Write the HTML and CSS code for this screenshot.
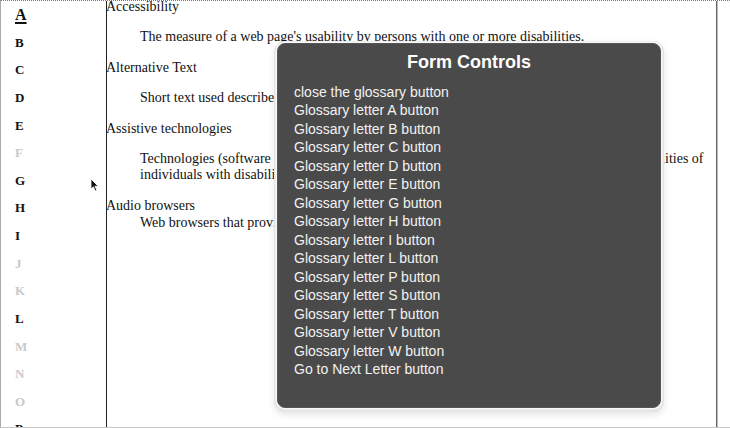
FILE: index.html
```html
<!DOCTYPE html>
<html lang="en">
<head>
<meta charset="utf-8">
<title>Glossary</title>
<link rel="stylesheet" href="styles.css">
</head>
<body>
<div class="frame">
  <nav class="letters">
    <a class="letter current">A</a>
    <a class="letter">B</a>
    <a class="letter">C</a>
    <a class="letter">D</a>
    <a class="letter">E</a>
    <span class="letter off">F</span>
    <a class="letter">G</a>
    <a class="letter">H</a>
    <a class="letter">I</a>
    <span class="letter off">J</span>
    <span class="letter off">K</span>
    <a class="letter">L</a>
    <span class="letter off">M</span>
    <span class="letter off">N</span>
    <span class="letter off">O</span>
    <a class="letter">P</a>
  </nav>
  <main class="content">
    <dl class="terms">
      <dt>Accessibility</dt>
      <dd>The measure of a web page's usability by persons with one or more disabilities.</dd>
      <dt>Alternative Text</dt>
      <dd>Short text used described the content and function of an image.</dd>
      <dt>Assistive technologies</dt>
      <dd class="wide">Technologies (software or hardware) used to extend, maintain, improve the functional capabilities of individuals with disabilities.</dd>
      <dt>Audio browsers</dt>
      <dd class="tight">Web browsers that provide spoken output of page content.</dd>
    </dl>
  </main>
  <div class="gutter"></div>
</div>

<svg class="cursor" width="10" height="15" viewBox="0 0 10 15" aria-hidden="true">
  <path d="M1 1 L1 11 L3.4 8.8 L5.2 13 L6.8 12.3 L5 8.2 L8.2 8.2 Z" fill="#111" stroke="#fff" stroke-width="0.8"/>
</svg>

<section class="rotor" aria-label="Form Controls">
  <h2 class="rotor-title">Form Controls</h2>
  <ul class="rotor-list">
    <li>close the glossary button</li>
    <li>Glossary letter A button</li>
    <li>Glossary letter B button</li>
    <li>Glossary letter C button</li>
    <li>Glossary letter D button</li>
    <li>Glossary letter E button</li>
    <li>Glossary letter G button</li>
    <li>Glossary letter H button</li>
    <li>Glossary letter I button</li>
    <li>Glossary letter L button</li>
    <li>Glossary letter P button</li>
    <li>Glossary letter S button</li>
    <li>Glossary letter T button</li>
    <li>Glossary letter V button</li>
    <li>Glossary letter W button</li>
    <li>Go to Next Letter button</li>
  </ul>
</section>
</body>
</html>
```
FILE: styles.css
```css
html, body {
  margin: 0;
  padding: 0;
  background: #fff;
}
body {
  width: 730px;
  height: 428px;
  overflow: hidden;
  position: relative;
  font-family: "Liberation Serif", "Times New Roman", serif;
  color: #111;
}
.frame {
  display: flex;
  height: 428px;
  box-sizing: border-box;
  border-top: 1px dotted #777;
  border-left: 1px solid #aaa;
  border-bottom: 1px solid #c8c8c8;
  overflow: hidden;
}
.letters {
  flex: none;
  width: 106px;
  box-sizing: border-box;
  border-right: 1px solid #222;
  display: flex;
  flex-direction: column;
  padding-left: 14px;
}
.letter {
  display: block;
  flex: none;
  height: 27.64px;
  line-height: 27.64px;
  font-size: 13px;
  font-weight: bold;
  color: #111;
}
.letter.current {
  font-size: 16px;
  text-decoration: underline;
  text-decoration-thickness: 2px;
  text-underline-offset: 2px;
}
.letter.off {
  color: #c9c9c9;
}
.content {
  flex: none;
  width: 609px;
  border-right: 1px solid #666;
  box-shadow: 1px 0 0 #bbb;
  font-size: 14px;
}
.gutter {
  flex: 1;
}
.terms {
  margin: -2.5px 0 0 0;
  padding: 0 4px 0 0;
  line-height: 16px;
}
.terms dt {
  margin: 0 0 0 -1px;
}
.terms dd {
  margin: 14.5px 0 14.5px 33px;
}
.terms dd.tight {
  margin: 1px 0 0 33px;
}
.cursor {
  position: absolute;
  left: 90px;
  top: 178px;
}
.rotor {
  position: absolute;
  left: 277px;
  top: 43px;
  width: 384px;
  height: 365px;
  box-sizing: border-box;
  background: #4a4a4a;
  border: 1px solid #565656;
  border-radius: 8px;
  box-shadow: 0 0 0 1.5px #f7f7f7, 0 1px 0 3px #e4e4e4, 0 4px 7px 3px rgba(0,0,0,0.10);
  padding: 7px 16px 0 16px;
  font-family: "Liberation Sans", Arial, sans-serif;
  color: #f2f2f2;
}
.rotor-title {
  margin: 0;
  font-size: 18px;
  line-height: 22px;
  font-weight: bold;
  color: #fff;
  text-align: center;
}
.rotor-list {
  list-style: none;
  margin: 9.5px 0 0 0;
  padding: 0;
  font-size: 14px;
  line-height: 18.5px;
}
```
